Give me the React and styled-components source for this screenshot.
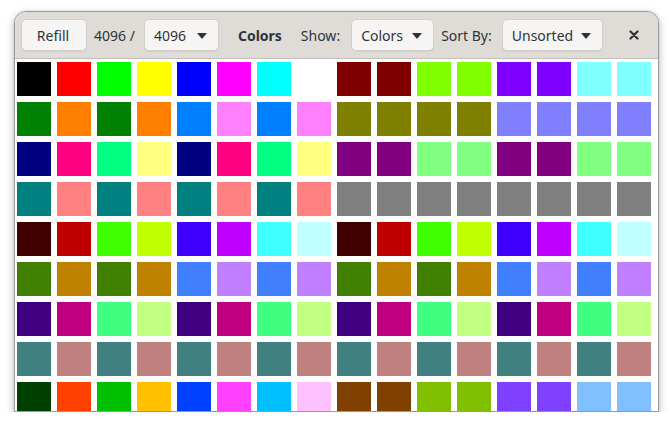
import styled, { createGlobalStyle } from "styled-components"

const GlobalStyle = createGlobalStyle`
  body {
    margin: 0;
    background: #ffffff;
    font-family: "Noto Sans", "Open Sans", sans-serif;
  }
`;

const Window = styled.div`
  box-sizing: border-box;
  margin: 11px 0 0 14px;
  width: 645px;
  height: 401px;
  border: 1px solid #9c9a97;
  border-radius: 12px 12px 0 0;
  background: #fff;
  overflow: hidden;
  display: flex;
  flex-direction: column;
  box-shadow: 0 3px 9px rgba(0, 0, 0, 0.28), 0 0 0 1px rgba(0, 0, 0, 0.04);
`;

const HeaderBar = styled.div`
  box-sizing: border-box;
  height: 47px;
  flex: none;
  display: flex;
  align-items: center;
  padding: 0 8px 0 6px;
  background: #dfdcd8;
  border-bottom: 1px solid #c2beb9;
  color: #2e3436;
  font-size: 14px;
`;

const Button = styled.button`
  box-sizing: border-box;
  flex: none;
  width: ${(p) => p.$w}px;
  height: 32px;
  padding: 0 11px 0 9px;
  display: flex;
  align-items: center;
  justify-content: ${(p) => (p.$dropdown ? "space-between" : "center")};
  border: 1px solid #d3cfca;
  border-radius: 5px;
  background: #f6f5f4;
  box-shadow: 0 1px 1px rgba(0, 0, 0, 0.06);
  font: inherit;
  color: #2e3436;
  margin-left: ${(p) => p.$ml || 0}px;
`;

const Arrow = styled.span`
  width: 0;
  height: 0;
  border-left: 5.5px solid transparent;
  border-right: 5.5px solid transparent;
  border-top: 6px solid #2e3436;
  margin-top: 1px;
`;

const Label = styled.span`
  margin-left: ${(p) => p.$ml || 0}px;
  white-space: nowrap;
`;

const Title = styled.span`
  font-weight: 700;
  margin-left: 19px;
  margin-right: 19px;
`;

const Spacer = styled.div`
  flex: 1;
`;

const Close = styled.div`
  width: 32px;
  height: 32px;
  display: flex;
  align-items: center;
  justify-content: center;
`;

const Body = styled.div`
  flex: 1;
  overflow: hidden;
  padding: 3px 0 0 2px;
`;

const Grid = styled.div`
  display: grid;
  grid-template-columns: repeat(16, 34px);
  grid-auto-rows: 34px;
  gap: 6px;
`;

const Swatch = styled.div`
  background: ${(p) => p.$color};
`;

const rows = [
  ["000000", "ff0000", "00ff00", "ffff00", "0000ff", "ff00ff", "00ffff", "ffffff", "800000", "800000", "80ff00", "80ff00", "8000ff", "8000ff", "80ffff", "80ffff"],
  ["008000", "ff8000", "008000", "ff8000", "0080ff", "ff80ff", "0080ff", "ff80ff", "808000", "808000", "808000", "808000", "8080ff", "8080ff", "8080ff", "8080ff"],
  ["000080", "ff0080", "00ff80", "ffff80", "000080", "ff0080", "00ff80", "ffff80", "800080", "800080", "80ff80", "80ff80", "800080", "800080", "80ff80", "80ff80"],
  ["008080", "ff8080", "008080", "ff8080", "008080", "ff8080", "008080", "ff8080", "808080", "808080", "808080", "808080", "808080", "808080", "808080", "808080"],
  ["400000", "c00000", "40ff00", "c0ff00", "4000ff", "c000ff", "40ffff", "c0ffff", "400000", "c00000", "40ff00", "c0ff00", "4000ff", "c000ff", "40ffff", "c0ffff"],
  ["408000", "c08000", "408000", "c08000", "4080ff", "c080ff", "4080ff", "c080ff", "408000", "c08000", "408000", "c08000", "4080ff", "c080ff", "4080ff", "c080ff"],
  ["400080", "c00080", "40ff80", "c0ff80", "400080", "c00080", "40ff80", "c0ff80", "400080", "c00080", "40ff80", "c0ff80", "400080", "c00080", "40ff80", "c0ff80"],
  ["408080", "c08080", "408080", "c08080", "408080", "c08080", "408080", "c08080", "408080", "c08080", "408080", "c08080", "408080", "c08080", "408080", "c08080"],
  ["004000", "ff4000", "00c000", "ffc000", "0040ff", "ff40ff", "00c0ff", "ffc0ff", "804000", "804000", "80c000", "80c000", "8040ff", "8040ff", "80c0ff", "80c0ff"],
];

export default function App() {
  return (
    <>
      <GlobalStyle />
      <Window>
        <HeaderBar>
          <Button $w={66}>Refill</Button>
          <Label $ml={7}>4096 /</Label>
          <Button $dropdown $w={75} $ml={9}>
            4096 <Arrow />
          </Button>
          <Title>Colors</Title>
          <Label>Show:</Label>
          <Button $dropdown $w={83} $ml={11}>
            Colors <Arrow />
          </Button>
          <Label $ml={7}>Sort By:</Label>
          <Button $dropdown $w={101} $ml={10}>
            Unsorted <Arrow />
          </Button>
          <Spacer />
          <Close>
            <svg width="10" height="10" viewBox="0 0 10 10">
              <path d="M1.5 1.5 L8.5 8.5 M8.5 1.5 L1.5 8.5" stroke="#2e3436" strokeWidth="2.2" strokeLinecap="round" />
            </svg>
          </Close>
        </HeaderBar>
        <Body>
          <Grid>
            {rows.flat().map((c, i) => (
              <Swatch key={i} $color={`#${c}`} />
            ))}
          </Grid>
        </Body>
      </Window>
    </>
  )
}
